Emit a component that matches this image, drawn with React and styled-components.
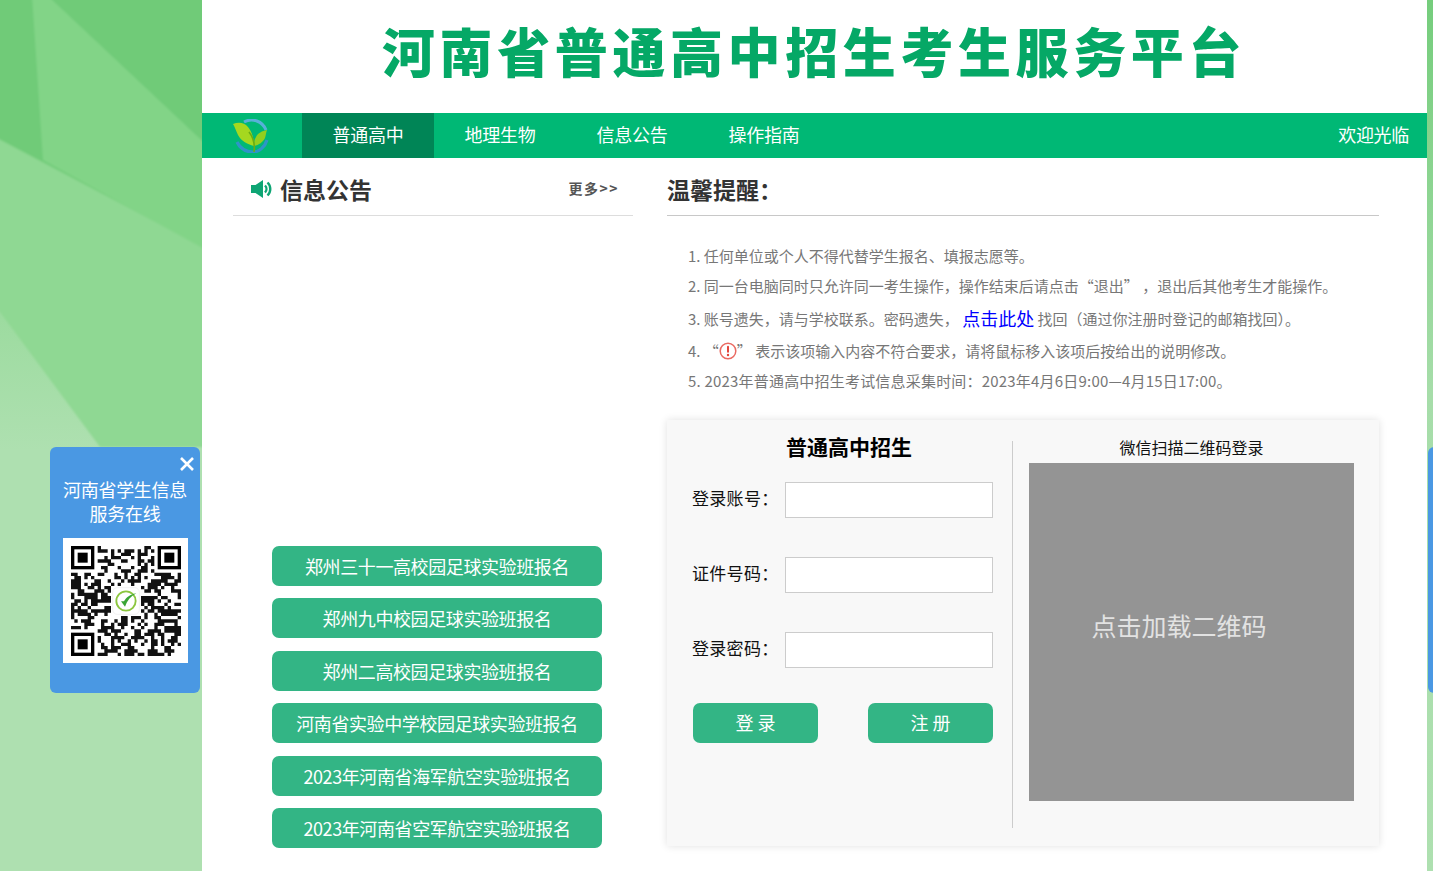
import React from "react";
import styled, { createGlobalStyle } from "styled-components";

const GlobalStyle = createGlobalStyle`
	html {
		height: 100%;
		overflow: hidden;
		background: #aee0b0;
	}
	body {
		margin: 0;
		padding: 0;
		font-family: "Noto Sans CJK SC", "Liberation Sans", sans-serif;
	}
	* {
		box-sizing: border-box;
	}
`;

const Backdrop = styled.svg`
	position: fixed;
	top: 0;
	left: 0;
	width: 1433px;
	height: 871px;
	z-index: -1;
`;

const Page = styled.div`
	margin: 0 6px 0 202px;
	height: 871px;
	background: #fff;
	overflow: hidden;
`;

const Title = styled.h1`
	margin: 0;
	height: 113px;
	padding-right: 1px;
	line-height: 101px;
	text-align: center;
	font-size: 53px;
	font-weight: 900;
	letter-spacing: 4.6px;
	color: #05a866;
`;

const Nav = styled.nav`
	display: flex;
	align-items: stretch;
	height: 45px;
	background: #00b875;
	color: #fff;
	font-size: 18px;
	line-height: 43px;
	letter-spacing: -0.3px;
`;

const LogoCell = styled.div`
	display: flex;
	align-items: center;
	justify-content: center;
	width: 100px;
	padding-right: 4px;
`;

const NavItem = styled.a`
	width: 132px;
	text-align: center;
	background: ${(p) => (p.$active ? "#008556" : "transparent")};
`;

const Welcome = styled.span`
	margin-left: auto;
	padding-right: 18px;
`;

const Columns = styled.div`
	display: flex;
	padding-left: 31px;
	gap: 34px;
`;

const LeftColumn = styled.section`
	width: 400px;
`;

const RightColumn = styled.section`
	width: 712px;
`;

const HeadRow = styled.div`
	display: flex;
	align-items: center;
	height: 58px;
	padding: ${(p) => (p.$plain ? "4px 0 0" : "5px 14px 0 18px")};
	border-bottom: 1px solid ${(p) => (p.$plain ? "#c8c8c8" : "#ddd")};
`;

const HeadText = styled.h2`
	margin: 0 0 0 ${(p) => (p.$plain ? "0" : "7px")};
	font-size: 23px;
	font-weight: 700;
	color: #333;
`;

const More = styled.a`
	margin: 0 0 2px auto;
	font-size: 14px;
	font-weight: 700;
	letter-spacing: 1.5px;
	color: #555;
`;

const ApplyList = styled.div`
	display: flex;
	flex-direction: column;
	gap: 12.4px;
	margin: 330px 0 0 39px;
	width: 330px;
`;

const ApplyButton = styled.a`
	height: 40px;
	line-height: 40px;
	text-align: center;
	font-size: 18px;
	letter-spacing: -0.4px;
	color: #fff;
	background: #33b585;
	border-radius: 7px;
`;

const Tips = styled.ol`
	list-style: none;
	margin: 0;
	padding: 24px 0 0 21px;
	font-size: 15px;
	color: #777;
`;

const Tip = styled.li`
	display: flex;
	align-items: center;
	height: ${(p) => p.$h}px;
	letter-spacing: ${(p) => p.$track || 0}px;
	white-space: pre;
`;

const Link = styled.a`
	font-size: 18px;
	color: #0000ff;
`;

const Card = styled.div`
	display: flex;
	margin-top: 25px;
	height: 426px;
	background: #f8f8f8;
	box-shadow: 0 0 8px rgba(0, 0, 0, 0.12);
`;

const FormPane = styled.form`
	width: 345px;
	padding: 14px 6px 0 25px;
`;

const FormTitle = styled.div`
	height: 24px;
	line-height: 24px;
	text-align: center;
	font-size: 21px;
	font-weight: 700;
	color: #000;
	margin-bottom: 24px;
`;

const Field = styled.label`
	display: flex;
	align-items: center;
	margin-bottom: 39px;
	font-size: 17px;
	color: #111;
`;

const FieldName = styled.span`
	width: 93px;
	padding-bottom: 5px;
	letter-spacing: 0.3px;
	white-space: nowrap;
`;

const TextBox = styled.input`
	width: 208px;
	height: 36px;
	background: #fff;
	border: 1px solid #ccc;
	outline: none;
`;

const Actions = styled.div`
	display: flex;
	gap: 50px;
	margin: -4px 0 0 1px;
`;

const ActionButton = styled.button`
	width: 125px;
	height: 40px;
	border: 0;
	border-radius: 7px;
	background: #33b585;
	color: #fff;
	font-family: inherit;
	font-size: 18px;
	padding: 0 0 2px;
`;

const QrPane = styled.div`
	margin-top: 21px;
	height: 387px;
	padding-left: 16px;
	border-left: 1px solid #ccc;
`;

const QrCaption = styled.div`
	height: 22px;
	line-height: 12px;
	text-align: center;
	font-size: 16px;
	color: #111;
	width: 325px;
`;

const QrLoad = styled.div`
	display: flex;
	align-items: center;
	justify-content: center;
	width: 325px;
	height: 338px;
	padding: 0 25px 14px 0;
	background: #949494;
	color: #e2e2e2;
	font-size: 25px;
`;

const FloatPanel = styled.aside`
	position: fixed;
	top: 447px;
	left: ${(p) => p.$left}px;
	width: 150px;
	height: 246px;
	padding-top: 30px;
	background: #4a98e3;
	border-radius: 6px;
	color: #fff;
	font-size: 18px;
	line-height: 24px;
	letter-spacing: -0.3px;
	text-align: center;
`;

const CloseMark = styled.svg`
	position: absolute;
	top: 9px;
	right: 5px;
`;

const QrBox = styled.div`
	display: flex;
	align-items: center;
	justify-content: center;
	width: 125px;
	height: 125px;
	margin: 13px 0 0 13px;
	background: #fff;
`;

// fake qr body, only has to read as a qr code at this size
const QR_SIZE = 33;

const inFinder = (x, y) =>
	(x < 8 && y < 8) || (x > QR_SIZE - 9 && y < 8) || (x < 8 && y > QR_SIZE - 9);

const buildQrPath = () => {
	let seed = 20230406;
	const next = () => {
		seed = (seed * 1103515245 + 12345) & 0x7fffffff;
		return (seed >> 16) & 1;
	};
	let d = "";
	for (let y = 0; y < QR_SIZE; y++) {
		for (let x = 0; x < QR_SIZE; x++) {
			const bit = next();
			const nearLogo = x > 11 && x < 21 && y > 11 && y < 21;
			if (!inFinder(x, y) && !nearLogo && bit) d += `M${x} ${y}h1v1h-1z`;
		}
	}
	return d;
};

const qrPath = buildQrPath();

const Finder = ({ x, y }) => (
	<g>
		<rect x={x + 0.5} y={y + 0.5} width="6" height="6" fill="none" stroke="#000" />
		<rect x={x + 2} y={y + 2} width="3" height="3" fill="#000" />
	</g>
);

const QrCode = () => (
	<svg width="110" height="110" viewBox="0 0 33 33">
		<path d={qrPath} fill="#111" />
		<Finder x={0} y={0} />
		<Finder x={26} y={0} />
		<Finder x={0} y={26} />
		<rect x="12.5" y="12.5" width="8" height="8" rx="1.4" fill="#fff" stroke="#e4e4e4" strokeWidth="0.15" />
		<circle cx="16.5" cy="16.5" r="2.9" fill="none" stroke="#8cc63f" strokeWidth="0.55" />
		<path d="M15 16.6l1.2 1.6c.6-1.8 1.7-3.1 3.4-4-1.9.3-3 1.3-3.7 2.4z" fill="#3aa535" />
	</svg>
);

const LeafLogo = () => (
	<svg width="37" height="34" viewBox="0 0 37 34">
		<path d="M12 3A15.5 15.5 0 0 1 34 11" fill="none" stroke="#58b0d8" strokeWidth="3" />
		<path d="M5 23C9 31 16 33 21 33C27 33 33 28 35 21" fill="none" stroke="#2e94c8" strokeWidth="3.2" />
		<path d="M1 5C6 3 12 3 16 8C20 13 22 20 22 27C15 25 9 22 6 16C4 12 3 8 1 5z" fill="#a5d81f" />
		<path d="M35 11C30 12 26 14 24 18C22 21 22 24 22 27C27 26 31 23 33 19C34 16 34 13 35 11z" fill="#93cf1e" />
		<path d="M17 13C21 18 23 26 22 33" fill="none" stroke="#6aad12" strokeWidth="1.6" />
	</svg>
);

const SpeakerIcon = () => (
	<svg width="22" height="20" viewBox="0 0 22 20">
		<path d="M0 6h4.5L12 1v18l-7.5-5H0z" fill="#0ea574" />
		<path d="M14 6.5a5 5 0 0 1 0 7" fill="none" stroke="#0ea574" strokeWidth="2.4" />
		<path d="M16.5 3.5a9 9 0 0 1 0 13" fill="none" stroke="#0ea574" strokeWidth="2.4" />
	</svg>
);

const AlertIcon = () => (
	<svg width="18" height="18" viewBox="0 0 18 18">
		<circle cx="9" cy="9" r="7.8" fill="#fff" stroke="#ea6a62" strokeWidth="1.5" />
		<rect x="8" y="3.8" width="2" height="7" rx="1" fill="#e4453c" />
		<circle cx="9" cy="13" r="1.2" fill="#e4453c" />
	</svg>
);

const applyLinks = [
	"郑州三十一高校园足球实验班报名",
	"郑州九中校园足球实验班报名",
	"郑州二高校园足球实验班报名",
	"河南省实验中学校园足球实验班报名",
	"2023年河南省海军航空实验班报名",
	"2023年河南省空军航空实验班报名",
];

const App = () => (
	<>
		<GlobalStyle />
		<Backdrop viewBox="0 0 1433 871">
			<defs>
				<linearGradient id="strip" x1="0" y1="0" x2="0" y2="1">
					<stop offset="0" stopColor="#75cd7c" />
					<stop offset="0.45" stopColor="#a6dda9" />
					<stop offset="1" stopColor="#aee0b0" />
				</linearGradient>
				<linearGradient id="corner" gradientUnits="userSpaceOnUse" x1="0" y1="312" x2="0" y2="450">
					<stop offset="0" stopColor="#9cdb9f" />
					<stop offset="1" stopColor="#aee0b0" />
				</linearGradient>
				<filter id="soft" x="-5%" y="-5%" width="110%" height="110%">
					<feGaussianBlur stdDeviation="1" />
				</filter>
			</defs>
			<rect x="-20" y="-20" width="240" height="911" fill="url(#corner)" />
			<g filter="url(#soft)">
				<polygon points="-20,-20 230,-20 230,447 100,447 -20,285" fill="#8fd893" />
				<polygon points="-20,-20 230,-20 230,261 -20,129" fill="#70cb78" />
				<polygon points="31,-20 230,167 230,263 43,160" fill="#82d487" />
			</g>
			<rect x="1427" width="6" height="871" fill="url(#strip)" />
		</Backdrop>
		<FloatPanel $left={50}>
			<CloseMark width="16" height="16" viewBox="0 0 16 16">
				<path d="M2 2l12 12M14 2L2 14" stroke="#fff" strokeWidth="2.6" />
			</CloseMark>
			河南省学生信息
			<br />
			服务在线
			<QrBox>
				<QrCode />
			</QrBox>
		</FloatPanel>
		<FloatPanel $left={1428} />
		<Page>
			<Title>河南省普通高中招生考生服务平台</Title>
			<Nav>
				<LogoCell>
					<LeafLogo />
				</LogoCell>
				<NavItem $active>普通高中</NavItem>
				<NavItem>地理生物</NavItem>
				<NavItem>信息公告</NavItem>
				<NavItem>操作指南</NavItem>
				<Welcome>欢迎光临</Welcome>
			</Nav>
			<Columns>
				<LeftColumn>
					<HeadRow>
						<SpeakerIcon />
						<HeadText>信息公告</HeadText>
						<More>更多&gt;&gt;</More>
					</HeadRow>
					<ApplyList>
						{applyLinks.map((text) => (
							<ApplyButton key={text}>{text}</ApplyButton>
						))}
					</ApplyList>
				</LeftColumn>
				<RightColumn>
					<HeadRow $plain>
						<HeadText $plain>温馨提醒：</HeadText>
					</HeadRow>
					<Tips>
						<Tip $h={30}>1. 任何单位或个人不得代替学生报名、填报志愿等。</Tip>
						<Tip $h={30}>2. 同一台电脑同时只允许同一考生操作，操作结束后请点击“退出” ，退出后其他考生才能操作。</Tip>
						<Tip $h={36}>
							3. 账号遗失，请与学校联系。密码遗失， <Link>点击此处</Link> 找回（通过你注册时登记的邮箱找回）。
						</Tip>
						<Tip $h={29}>
							4. “<AlertIcon />” 表示该项输入内容不符合要求，请将鼠标移入该项后按给出的说明修改。
						</Tip>
						<Tip $h={30} $track={0.2}>5. 2023年普通高中招生考试信息采集时间：2023年4月6日9:00—4月15日17:00。</Tip>
					</Tips>
					<Card>
						<FormPane>
							<FormTitle>普通高中招生</FormTitle>
							<Field>
								<FieldName>登录账号：</FieldName>
								<TextBox type="text" />
							</Field>
							<Field>
								<FieldName>证件号码：</FieldName>
								<TextBox type="text" />
							</Field>
							<Field>
								<FieldName>登录密码：</FieldName>
								<TextBox type="password" />
							</Field>
							<Actions>
								<ActionButton type="button">登 录</ActionButton>
								<ActionButton type="button">注 册</ActionButton>
							</Actions>
						</FormPane>
						<QrPane>
							<QrCaption>微信扫描二维码登录</QrCaption>
							<QrLoad>点击加载二维码</QrLoad>
						</QrPane>
					</Card>
				</RightColumn>
			</Columns>
		</Page>
	</>
);

export default App;
